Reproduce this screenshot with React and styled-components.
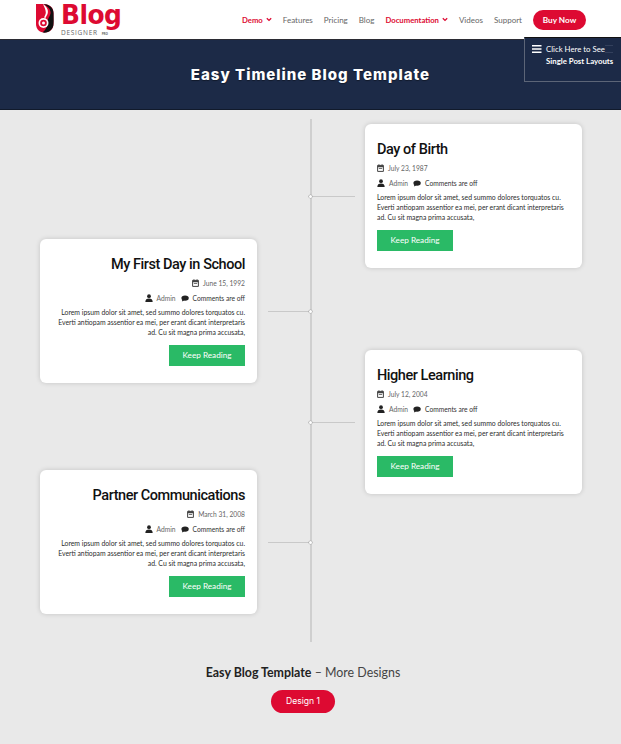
import React from "react";
import styled, { createGlobalStyle } from "styled-components";

const Global = createGlobalStyle`
  html, body { margin: 0; padding: 0; }
  body { background: #e9e9e9; width: 621px; height: 744px; overflow: hidden; font-family: "Lato", sans-serif; }
  * { box-sizing: border-box; }
`;

const Page = styled.div`
  position: relative;
  width: 621px;
  height: 744px;
  overflow: hidden;
`;

const Header = styled.header`
  height: 39px;
  background: #fff;
  display: flex;
  align-items: center;
  padding: 0 35px 0 35px;
`;

const Logo = styled.div`
  display: flex;
  align-items: flex-start;
  gap: 7px;
  width: 208px;
  height: 39px;
  padding: 3px 0 0 1px;
`;

const LogoWords = styled.div`
  display: flex;
  flex-direction: column;
`;

const LogoBlog = styled.span`
  font: 700 26.5px/24px "DejaVu Sans", sans-serif;
  letter-spacing: -0.6px;
  color: #dd0a32;
  transform: scaleX(0.94);
  transform-origin: left;
  width: 60px;
  height: 24px;
  white-space: nowrap;
`;

const LogoSub = styled.span`
  font: 400 6.5px/7px "Open Sans", sans-serif;
  letter-spacing: 0.72px;
  color: #666;
  margin-top: 2px;
  white-space: nowrap;
  small { font-size: 3px; font-weight: 700; margin-left: 4px; letter-spacing: 0; }
`;

const Nav = styled.nav`
  display: flex;
  align-items: center;
  gap: 11px;
  font: 400 8px/12px "Lato", sans-serif;
`;

const NavItem = styled.a`
  color: ${(p) => (p.$active ? "#dd0a32" : "#666")};
  font-weight: ${(p) => (p.$active ? 700 : 400)};
  font-size: ${(p) => (p.$active ? "7.7px" : "8px")};
  display: flex;
  align-items: center;
  gap: 3px;
  white-space: nowrap;
`;

const BuyNow = styled.a`
  width: 53px;
  height: 20px;
  border-radius: 10px;
  background: #dd0a32;
  color: #fff;
  font-weight: 700;
  font-size: 8.2px;
  display: flex;
  align-items: center;
  justify-content: center;
`;

const Hero = styled.section`
  height: 71px;
  background: #1c2a47;
  border-top: 1px solid #2b2b33;
  border-bottom: 1px solid #111a2b;
  display: flex;
  align-items: center;
  justify-content: center;
`;

const HeroTitle = styled.h1`
  margin: 0;
  color: #fff;
  font: 800 15px/18px "Inter", sans-serif;
  letter-spacing: 1px;
  text-shadow: 0 1px 1px rgba(0,0,0,.4);
`;

const FloatMenu = styled.div`
  position: absolute;
  left: 524px;
  top: 37px;
  width: 97px;
  height: 45px;
  background: #1c2a47;
  border: 1px solid #5c6577;
  border-top-color: #111;
  border-right: 0;
  padding: 7px 0 0 7px;
  display: flex;
  gap: 4px;
  color: #fff;
  font: 400 7.8px/12px "Lato", sans-serif;
`;

const FloatText = styled.div`
  white-space: nowrap;
  margin-top: -2px;
  b { font-weight: 700; display: block; }
`;

const GhostBars = styled.span`
  position: absolute;
  left: 80px;
  top: 7px;
  width: 8px;
  height: 8px;
  border-top: 1px solid #33405c;
  border-bottom: 1px solid #33405c;
`;

const Timeline = styled.div`
  position: relative;
  height: 523px;
  margin-top: 9px;
  display: grid;
  grid-template-columns: 310px 311px;
  &::before {
    content: "";
    position: absolute;
    left: 310px;
    top: 0;
    bottom: 0;
    width: 1.5px;
    background: #cfcfcf;
  }
`;

const Column = styled.div`
  display: flex;
  flex-direction: column;
  align-items: flex-start;
  padding: ${(p) => (p.$left ? "120px 0 0 40px" : "5px 0 0 55px")};
  gap: ${(p) => (p.$left ? "87px" : "82px")};
`;

const Card = styled.article`
  position: relative;
  width: 217px;
  height: 144px;
  background: #fff;
  border-radius: 6px;
  box-shadow: 0 0 5px rgba(0, 0, 0, 0.16);
  padding: 16px 12px 0 12px;
  display: flex;
  flex-direction: column;
  align-items: ${(p) => (p.$left ? "flex-end" : "flex-start")};
  text-align: ${(p) => (p.$left ? "right" : "left")};
  &::after {
    content: "";
    position: absolute;
    top: 72px;
    ${(p) => (p.$left ? "left: 228px; width: 42px;" : "right: 227px; width: 44px;")}
    height: 1px;
    background: #c9c9c9;
  }
`;

const Dot = styled.span`
  position: absolute;
  top: 71px;
  ${(p) => (p.$left ? "left: 269px;" : "left: -56px;")}
  width: 3px;
  height: 3px;
  border-radius: 50%;
  background: #fff;
  box-shadow: 0 0 0 .6px #aaa;
  z-index: 1;
`;

const CardTitle = styled.h2`
  margin: 0;
  font: 500 14.5px/20px "Roboto", sans-serif;
  letter-spacing: -0.45px;
  color: #111;
  white-space: nowrap;
`;

const MetaRow = styled.div`
  display: flex;
  align-items: center;
  gap: 3px;
  font: 400 6.7px/10px "Lato", sans-serif;
  color: #666;
  margin-top: ${(p) => p.$mt}px;
  white-space: nowrap;
`;

const MetaDark = styled.span`
  color: #333;
  margin-left: 1px;
`;

const MetaText = styled.span`
  margin-left: 1px;
`;

const Spacer = styled.span`
  width: 0;
  margin-left: -1px;
`;

const Excerpt = styled.p`
  margin: 4px 0 0;
  width: 193px;
  font: 400 6.85px/10px "Lato", sans-serif;
  color: #2c2c2c;
`;

const KeepReading = styled.a`
  width: 76px;
  height: 21px;
  margin-top: 8px;
  background: #2aba66;
  color: #fff;
  font: 400 8.2px/21px "Lato", sans-serif;
  text-align: center;
`;

const Footer = styled.div`
  display: flex;
  flex-direction: column;
  align-items: center;
  padding: 22px 15px 0 0;
`;

const FooterTitle = styled.h3`
  margin: 0;
  font: 400 12.4px/17px "Lato", sans-serif;
  color: #444;
  b { font-weight: 700; color: #222; }
`;

const DesignButton = styled.a`
  width: 64px;
  height: 23px;
  margin-top: 9px;
  border-radius: 12px;
  background: #dd0a32;
  color: #fff;
  font: 400 8.6px/23px "Inter", sans-serif;
  text-align: center;
`;

const Chevron = () => (
  <svg width="6" height="5" viewBox="0 0 6 5"><path d="M.8 1.200 3 3.400l2.200-2.200" fill="none" stroke="#dd0a32" strokeWidth="1.300" /></svg>
);

const Calendar = () => (
  <svg width="7" height="8" viewBox="0 0 7 8"><path d="M.6 1.400h5.800v6H.6z" fill="#fff" stroke="#444" strokeWidth="1" /><path d="M.6 1.400h5.800v1.800H.6zM1.500 .2h.9v1.500h-.9zM4.600 .2h.9v1.500h-.9zM1.800 4.300h3.400v.8H1.800z" fill="#444" /></svg>
);

const User = () => (
  <svg width="8" height="8" viewBox="0 0 8 8"><circle cx="4" cy="2.200" r="1.900" fill="#222" /><path d="M.3 8c0-2.400 1.500-3.500 3.700-3.500S7.700 5.600 7.700 8z" fill="#222" /></svg>
);

const Bubble = () => (
  <svg width="8" height="7" viewBox="0 0 9 8"><ellipse cx="4.600" cy="3.500" rx="4.200" ry="3" fill="#222" /><path d="M1.500 5 1 7.500 3.800 6z" fill="#222" /></svg>
);

const Bars = () => (
  <svg width="10" height="8" viewBox="0 0 10 8" style={{ flex: "none" }}><path d="M0 0h9.500v1.600H0zM0 3.200h9.500v1.600H0zM0 6.400h9.500V8H0z" fill="#fff" /></svg>
);

const LogoMark = () => (
  <svg width="18" height="30" viewBox="0 0 18 30">
    <path d="M0 1h7c6 0 10.500 3 10.500 9v11c0 5-4 8.500-9 8.500-5 0-8.500-3.500-8.500-8.500z" fill="#dd0a32" />
    <path d="M7 1c5 2.500 8 5 7.500 9.500-.4 3-3 5-3 8 .3 4-1 8-5 11 6 1 11-3 11-9 .3-3.500 0-7 0-10.500C17.500 4 12 1 7 1z" fill="#111" />
    <path d="M7 1c3.500 2.500 5.500 5.500 4.800 9-.5 2.200-1.800 3.500-2.300 5L8 14.500c.8-2 1.800-3 1.800-5C9.800 6.500 8 3.500 7 1z" fill="#fff" />
    <circle cx="7.500" cy="20" r="5" fill="#fff" />
    <circle cx="7.500" cy="20" r="3.300" fill="#dd0a32" />
    <circle cx="7.500" cy="20" r="1.500" fill="#fff" />
  </svg>
);

const lorem = "Lorem ipsum dolor sit amet, sed summo dolores torquatos cu. Everti antiopam assentior ea mei, per erant dicant interpretaris ad. Cu sit magna prima accusata,";

const PostCard = ({ left, title, date }) => (
  <Card $left={left}>
    <Dot $left={left} />
    <CardTitle>{title}</CardTitle>
    <MetaRow $mt={3}>
      <Calendar />
      <MetaText>{date}</MetaText>
    </MetaRow>
    <MetaRow $mt={5}>
      <User />
      <MetaText>Admin</MetaText>
      <Spacer />
      <Bubble />
      <MetaDark>Comments are off</MetaDark>
    </MetaRow>
    <Excerpt>{lorem}</Excerpt>
    <KeepReading>Keep Reading</KeepReading>
  </Card>
);

export default function App() {
  return (
    <Page>
      <Global />
      <Header>
        <Logo>
          <LogoMark />
          <LogoWords>
            <LogoBlog>Blog</LogoBlog>
            <LogoSub>DESIGNER<small>PRO</small></LogoSub>
          </LogoWords>
        </Logo>
        <Nav>
          <NavItem $active>Demo <Chevron /></NavItem>
          <NavItem>Features</NavItem>
          <NavItem>Pricing</NavItem>
          <NavItem>Blog</NavItem>
          <NavItem $active>Documentation <Chevron /></NavItem>
          <NavItem>Videos</NavItem>
          <NavItem>Support</NavItem>
          <BuyNow>Buy Now</BuyNow>
        </Nav>
      </Header>
      <Hero>
        <HeroTitle>Easy Timeline Blog Template</HeroTitle>
      </Hero>
      <FloatMenu>
        <GhostBars />
        <Bars />
        <FloatText>Click Here to See<b>Single Post Layouts</b></FloatText>
      </FloatMenu>
      <Timeline>
        <Column $left>
          <PostCard left title="My First Day in School" date="June 15, 1992" />
          <PostCard left title="Partner Communications" date="March 31, 2008" />
        </Column>
        <Column>
          <PostCard title="Day of Birth" date="July 23, 1987" />
          <PostCard title="Higher Learning" date="July 12, 2004" />
        </Column>
      </Timeline>
      <Footer>
        <FooterTitle><b>Easy Blog Template</b> – More Designs</FooterTitle>
        <DesignButton>Design 1</DesignButton>
      </Footer>
    </Page>
  );
}
